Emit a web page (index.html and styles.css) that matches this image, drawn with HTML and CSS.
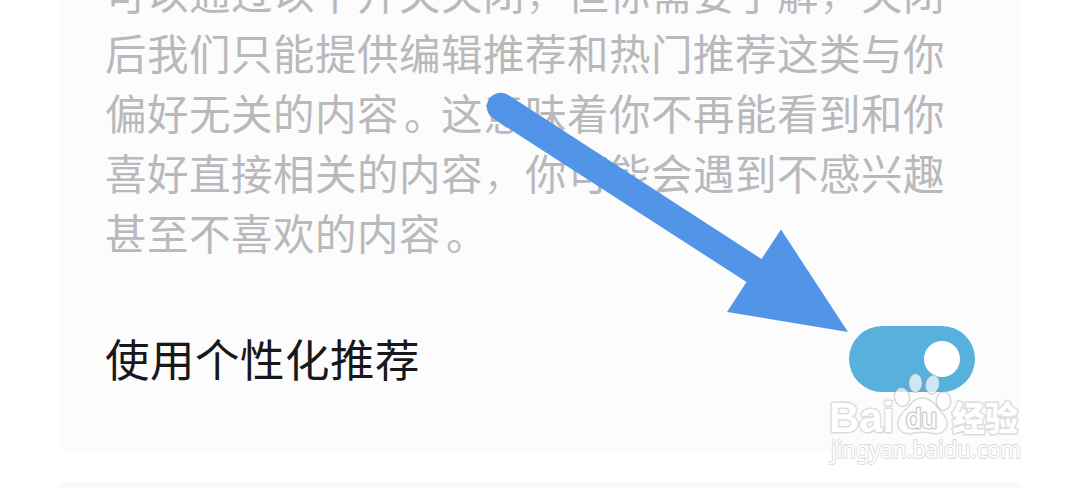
FILE: index.html
```html
<!DOCTYPE html>
<html lang="zh-CN">
<head>
    <meta charset="UTF-8">
    <meta name="viewport" content="width=device-width, initial-scale=1.0">
    <title>个性化推荐</title>
    <link rel="stylesheet" href="styles.css">
</head>
<body>
    <div class="page">
        <div class="card">
            <p class="description">
                可以通过以下开关关闭<span class="comma">，</span>但你需要了解<span class="comma">，</span>关闭<br>
                后我们只能提供编辑推荐和热门推荐这类与你<br>
                偏好无关的内容<span class="stop">。</span>这意味着你不再能看到和你<br>
                喜好直接相关的内容<span class="comma">，</span>你可能会遇到不感兴趣<br>
                甚至不喜欢的内容<span class="stop">。</span>
            </p>
            <div class="setting">
                <span class="label">使用个性化推荐</span>
                <span class="switch"><span class="knob"></span></span>
            </div>
        </div>
        <div class="card next"></div>
    </div>

    <svg class="arrow" width="1080" height="488" viewBox="0 0 1080 488">
        <path d="M509.500 95.800 L761.500 259 L781 229.500 L848 332 L727 312 L746.500 282 L494 119 A14 14 0 1 1 509.500 95.800 Z" fill="#5294e8"/>
    </svg>

    <svg class="watermark" width="1080" height="488" viewBox="0 0 1080 488">
        <g class="mark">
            <ellipse cx="902" cy="397" rx="7.500" ry="9.500" transform="rotate(-8 902 397)"/>
            <ellipse cx="915.500" cy="383" rx="6.700" ry="9.500"/>
            <ellipse cx="932.500" cy="384.500" rx="7" ry="9.500" transform="rotate(12 932.500 384.500)"/>
            <ellipse cx="943.500" cy="401" rx="7.300" ry="9.200"/>
            <path d="M922 398 C914 398 911 404 907 408 C902 413 897 418 898 425 C899 433 907 435 914 433 C920 432 925 432 931 433 C939 435 946 432 947 425 C948 418 942 413 938 408 C934 403 930 398 922 398 Z"/>
        </g>
        <text class="bai" x="829" y="432" textLength="65" lengthAdjust="spacingAndGlyphs">Bai</text>
        <text class="du" x="906" y="428" textLength="31" lengthAdjust="spacingAndGlyphs">du</text>
        <text class="jingyan" x="952" y="431" textLength="66" lengthAdjust="spacingAndGlyphs">经验</text>
        <text class="url" x="831" y="458" textLength="190" lengthAdjust="spacingAndGlyphs">jingyan.baidu.com</text>
    </svg>
</body>
</html>
```
FILE: styles.css
```css
body {
    margin: 0;
    height: 488px;
    overflow: hidden;
    position: relative;
    background-color: #fff;
    font-family: "Noto Sans CJK SC", sans-serif;
}
.page {
    display: flex;
    flex-direction: column;
    gap: 30px;
    padding: 0 60px;
    height: 488px;
    overflow: hidden;
}
.card {
    box-sizing: border-box;
    flex: none;
    height: 452px;
    padding: 0 45px;
    background-color: #fcfcfc;
    border-radius: 0 0 6px 6px;
}
.next {
    height: 40px;
    background-color: #fafafa;
    border-radius: 6px 6px 0 0;
}
.description {
    margin: -38px 0 0;
    font-size: 41.5px;
    font-weight: 400;
    line-height: 60px;
    letter-spacing: 0.5px;
    color: #b9b9bb;
    white-space: nowrap;
}
.stop {
    position: relative;
    left: 5px;
}
.comma {
    position: relative;
    left: 1px;
    font-weight: 300;
}
.setting {
    display: flex;
    align-items: center;
    justify-content: space-between;
    margin-top: 64px;
    height: 66px;
}
.label {
    padding-bottom: 2px;
    font-size: 44.5px;
    line-height: 64px;
    letter-spacing: 0.5px;
    font-weight: 400;
    color: #18181a;
}
.switch {
    box-sizing: border-box;
    display: flex;
    align-items: center;
    justify-content: flex-end;
    width: 126px;
    height: 66px;
    padding-right: 15px;
    border-radius: 33px;
    background-color: #58b0dd;
}
.knob {
    width: 36px;
    height: 36px;
    border-radius: 50%;
    background-color: #fff;
}
.arrow,
.watermark {
    position: absolute;
    top: 0;
    left: 0;
}
.mark {
    fill: rgba(255, 255, 255, 0.7);
    stroke: rgba(120, 120, 120, 0.25);
    stroke-width: 1.5;
}
.watermark text {
    fill: #fff;
    stroke: #dcdcdc;
    stroke-width: 2;
    stroke-linejoin: round;
    paint-order: stroke;
}
.watermark .bai {
    font: bold 43px "Liberation Sans", sans-serif;
    stroke-width: 3;
}
.watermark .du {
    font: 27px "Liberation Sans", sans-serif;
    stroke: #cfcfcf;
    stroke-width: 3;
}
.watermark .jingyan {
    font: 900 34px "Noto Sans CJK SC", sans-serif;
    stroke-width: 3;
}
.url {
    font: 24px "Noto Sans", sans-serif;
}
```
